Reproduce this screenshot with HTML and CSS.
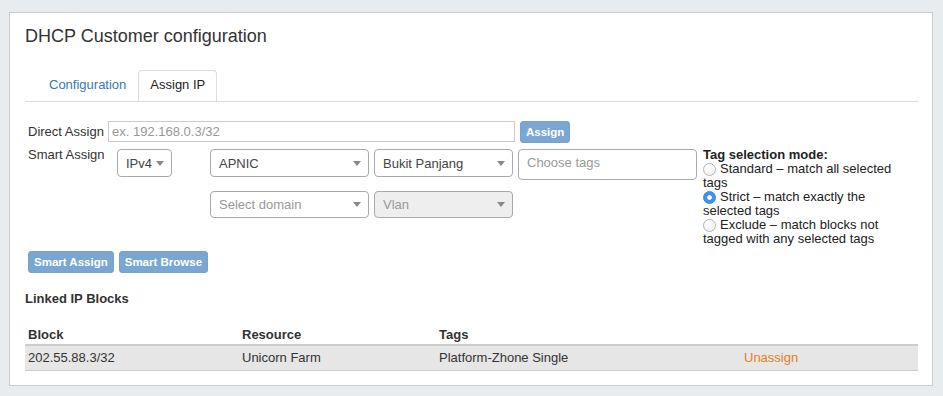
FILE: index.html
```html
<!DOCTYPE html>
<html lang="en">
  <head>
    <title>DHCP Customer configuration</title>
    <meta charset="utf-8" />
    <link rel="stylesheet" href="styles.css">
  </head>

  <body>
    <div class="panel">
      <h1 class="panel__title">DHCP Customer configuration</h1>

      <ul class="tabs">
        <li class="tabs__item"><a class="tabs__link" href="#">Configuration</a></li>
        <li class="tabs__item tabs__item--active"><a class="tabs__link" href="#">Assign IP</a></li>
      </ul>

      <div class="assign">
        <div class="assign__direct">
          <label class="assign__label assign__label--direct">Direct Assign</label>
          <input type="text" class="assign__input" placeholder="ex. 192.168.0.3/32" />
          <button class="btn">Assign</button>
        </div>

        <div class="assign__smart">
          <label class="assign__label assign__label--smart">Smart Assign</label>

          <div class="select select--version">
            <span class="select__text">IPv4</span><span class="select__arrow"></span>
          </div>

          <div class="assign__grid">
            <div class="select">
              <span class="select__text">APNIC</span><span class="select__arrow"></span>
            </div>
            <div class="select">
              <span class="select__text">Bukit Panjang</span><span class="select__arrow"></span>
            </div>
            <div class="tags">
              <span class="tags__placeholder">Choose tags</span>
            </div>
            <div class="select">
              <span class="select__text select__text--placeholder">Select domain</span><span class="select__arrow"></span>
            </div>
            <div class="select select--disabled">
              <span class="select__text select__text--placeholder">Vlan</span><span class="select__arrow"></span>
            </div>
          </div>

          <div class="mode">
            <div class="mode__title">Tag selection mode:</div>
            <label class="mode__option"><input type="radio" name="mode" class="mode__radio" />Standard – match all selected tags</label>
            <label class="mode__option"><input type="radio" name="mode" class="mode__radio" checked />Strict – match exactly the selected tags</label>
            <label class="mode__option"><input type="radio" name="mode" class="mode__radio" />Exclude – match blocks not tagged with any selected tags</label>
          </div>
        </div>

        <div class="assign__actions">
          <button class="btn">Smart Assign</button>
          <button class="btn">Smart Browse</button>
        </div>
      </div>

      <h2 class="linked__title">Linked IP Blocks</h2>

      <table class="linked__table">
        <colgroup>
          <col style="width: 214px">
          <col style="width: 197px">
          <col style="width: 305px">
          <col style="width: 177px">
        </colgroup>
        <thead>
          <tr>
            <th>Block</th>
            <th>Resource</th>
            <th>Tags</th>
            <th></th>
          </tr>
        </thead>
        <tbody>
          <tr>
            <td>202.55.88.3/32</td>
            <td>Unicorn Farm</td>
            <td>Platform-Zhone Single</td>
            <td><a class="linked__unassign" href="#">Unassign</a></td>
          </tr>
        </tbody>
      </table>
    </div>
  </body>
</html>
```

FILE: styles.css
```css
body {
  margin: 0;
  background: #e9ecef;
  font-family: "Liberation Sans", Arial, sans-serif;
  font-size: 13px;
  color: #333;
}

.panel {
  margin: 12px 10px 0 9px;
  padding: 13px 14px 14px 15px;
  background: #fff;
  border: 1px solid #ccc;
}

.panel__title {
  margin: 0;
  font-size: 18px;
  font-weight: normal;
  line-height: 20px;
  color: #333;
}

.tabs {
  display: flex;
  margin: 24px 0 0;
  padding: 0 0 0 12px;
  list-style: none;
  border-bottom: 1px solid #ddd;
}

.tabs__item {
  border: 1px solid transparent;
  border-bottom: 0;
  border-radius: 4px 4px 0 0;
}

.tabs__item--active {
  border-color: #ddd;
}

.tabs__link {
  display: block;
  padding: 5px 11px 7px;
  line-height: 18px;
  color: #337ab7;
  text-decoration: none;
}

.tabs__item--active .tabs__link {
  color: #222;
}

.assign {
  padding: 19px 0 0 3px;
}

.assign__direct {
  display: flex;
  align-items: flex-start;
}

.assign__label--direct {
  width: 80px;
  line-height: 22px;
}

.assign__input {
  box-sizing: border-box;
  width: 407px;
  height: 21px;
  margin: 0;
  padding: 0 3px;
  border: 1px solid #ccc;
  border-radius: 0;
  font-family: inherit;
  font-size: 13px;
  color: #333;
}

.assign__input::placeholder {
  color: #999;
}

.btn {
  box-sizing: border-box;
  height: 22px;
  margin: 0 0 0 5px;
  padding: 0 5px;
  background: #7aa7d2;
  border: 1px solid #77a2cb;
  border-radius: 3px;
  font-family: inherit;
  font-size: 11.5px;
  font-weight: bold;
  color: #fff;
}

.assign__smart {
  display: flex;
  align-items: flex-start;
  margin-top: 6px;
}

.assign__label--smart {
  width: 89px;
  margin-top: -1px;
  line-height: 14px;
}

.select {
  box-sizing: border-box;
  display: flex;
  align-items: center;
  justify-content: space-between;
  height: 28px;
  padding: 0 7px 0 8px;
  border: 1px solid #aaa;
  border-radius: 4px;
  background: #fff;
  color: #444;
}

.select--version {
  width: 55px;
  margin-right: 38px;
}

.select--disabled {
  background: #eee;
}

.select__text--placeholder {
  color: #999;
}

.select__arrow {
  width: 0;
  height: 0;
  border-top: 5px solid #888;
  border-left: 4px solid transparent;
  border-right: 4px solid transparent;
}

.assign__grid {
  display: grid;
  grid-template-columns: 159px 139px 179px;
  grid-template-rows: 31px 27px;
  column-gap: 5px;
  row-gap: 11px;
  align-items: start;
}

.assign__grid .select:nth-child(4),
.assign__grid .select:nth-child(5) {
  height: 27px;
}

.tags {
  box-sizing: border-box;
  height: 31px;
  padding: 4px 8px;
  border: 1px solid #aaa;
  border-radius: 4px;
  line-height: 18px;
  color: #999;
}

.mode {
  width: 205px;
  margin: -1px 0 0 6px;
  line-height: 14px;
  color: #222;
}

.mode__title {
  font-weight: bold;
}

.mode__option {
  display: block;
}

.mode__radio {
  -webkit-appearance: none;
  appearance: none;
  box-sizing: border-box;
  width: 13px;
  height: 13px;
  margin: 0 4px 0 0;
  vertical-align: -3px;
  border: 1px solid #b3b3b3;
  border-radius: 50%;
  background: linear-gradient(#fff, #f2f2f2);
}

.mode__radio:checked {
  border-color: #2f84ea;
  background: radial-gradient(circle, #fff 0 2px, #3b93f7 2.6px);
}

.assign__actions {
  display: flex;
  margin-top: 5px;
}

.assign__actions .btn:first-child {
  margin-left: 0;
}

.linked__title {
  margin: 17px 0 0;
  font-size: 13px;
  line-height: 18px;
  font-weight: bold;
  color: #333;
}

.linked__table {
  width: 100%;
  margin-top: 10px;
  border-collapse: collapse;
  table-layout: fixed;
}

.linked__table th {
  padding: 8px 3px 0;
  line-height: 18px;
  text-align: left;
  font-weight: bold;
  border-bottom: 2px solid #ccc;
}

.linked__table td {
  padding: 3px 3px;
  line-height: 18px;
  background: #e6e6e6;
  border-bottom: 1px solid #ccc;
}

.linked__unassign {
  color: #e67e22;
  text-decoration: none;
}
```
